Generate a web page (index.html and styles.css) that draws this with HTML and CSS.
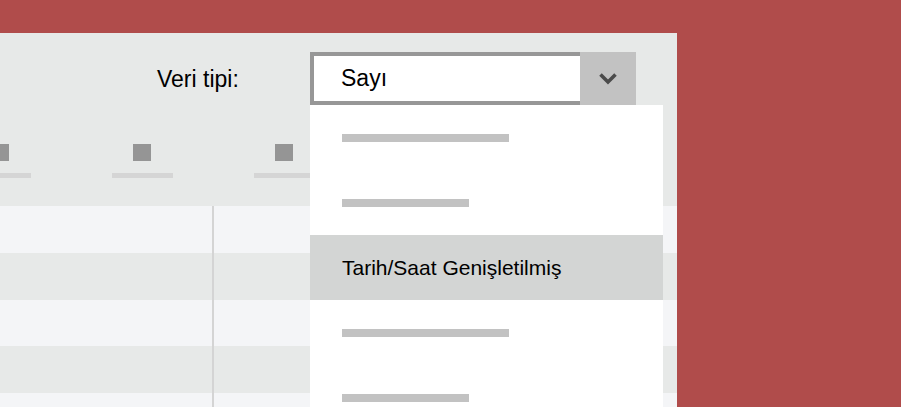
FILE: index.html
```html
<!DOCTYPE html>
<html lang="tr">
<head>
<meta charset="utf-8">
<title>Veri tipi</title>
<link rel="stylesheet" href="styles.css">
</head>
<body>
<div class="stage">
  <div class="panel">
    <div class="toolbar">
      <span class="label">Veri tipi:</span>
      <div class="select">
        <div class="select-value">Sayı</div>
        <div class="select-btn">
          <svg width="18" height="12" viewBox="0 0 18 12"><polyline points="1.5,1.5 9,9 16.5,1.5" fill="none" stroke="#4b4b4b" stroke-width="3.6"/></svg>
        </div>
      </div>
    </div>
    <div class="head">
      <div class="hcol"><span class="sq"></span><span class="hbar"></span></div>
      <div class="hcol"><span class="sq"></span><span class="hbar"></span></div>
      <div class="hcol"><span class="sq"></span><span class="hbar"></span></div>
      <div class="hcol"><span class="sq"></span><span class="hbar"></span></div>
      <div class="hcol"><span class="sq"></span><span class="hbar"></span></div>
    </div>
    <div class="table">
      <div class="row light"><div class="c1"></div><div class="c2"></div></div>
      <div class="row dark"><div class="c1"></div><div class="c2"></div></div>
      <div class="row light"><div class="c1"></div><div class="c2"></div></div>
      <div class="row dark"><div class="c1"></div><div class="c2"></div></div>
      <div class="row light"><div class="c1"></div><div class="c2"></div></div>
    </div>
    <div class="menu">
      <div class="item"><span class="ph long"></span></div>
      <div class="item"><span class="ph short"></span></div>
      <div class="item active">Tarih/Saat Genişletilmiş</div>
      <div class="item"><span class="ph long"></span></div>
      <div class="item"><span class="ph short"></span></div>
    </div>
  </div>
</div>
</body>
</html>
```
FILE: styles.css
```css
* { box-sizing: border-box; }
html, body { margin: 0; padding: 0; }
body {
  width: 901px;
  height: 407px;
  overflow: hidden;
  background: #b04c4b;
  font-family: "Liberation Sans", Arial, sans-serif;
  color: #000;
}
.stage {
  padding-top: 33px;
  height: 407px;
}
.panel {
  position: relative;
  width: 677px;
  height: 374px;
  background: #e7e9e8;
  overflow: hidden;
}
.toolbar {
  display: flex;
  align-items: center;
  height: 72px;
  padding-top: 19px;
  padding-left: 157px;
}
.label {
  font-size: 23px;
  width: 153px;
  line-height: 52px;
}
.select {
  display: flex;
  height: 53px;
}
.select-value {
  width: 270px;
  border: 4px solid #979797;
  border-right: none;
  background: #fff;
  font-size: 23px;
  line-height: 44px;
  padding-left: 27px;
}
.select-btn {
  width: 56px;
  background: #c2c2c2;
  display: flex;
  align-items: center;
  justify-content: center;
}
.head {
  display: flex;
  height: 101px;
  margin-left: -71px;
  padding-top: 39px;
}
.hcol {
  width: 142px;
  flex: none;
  display: flex;
  flex-direction: column;
  align-items: center;
}
.sq {
  width: 18px;
  height: 17px;
  background: #959595;
}
.hbar {
  margin-top: 12px;
  width: 61px;
  height: 5px;
  background: #d5d5d5;
}
.table {
  display: flex;
  flex-direction: column;
}
.row {
  display: flex;
  height: 47px;
}
.row:nth-child(3) { height: 46px; }
.light { background: #f4f5f7; }
.dark { background: #e7e9e8; }
.c1 {
  width: 214px;
  border-right: 2px solid #d4d4d4;
}
.c2 { flex: 1; }
.menu {
  position: absolute;
  left: 310px;
  top: 72px;
  width: 353px;
  bottom: 0;
  background: #fff;
  display: flex;
  flex-direction: column;
}
.item {
  flex: none;
  height: 65px;
  display: flex;
  align-items: center;
  padding-left: 32px;
  font-size: 21px;
}
.item.active {
  background: #d3d5d4;
}
.ph {
  display: block;
  height: 8px;
  background: #c2c2c2;
}
.ph.long { width: 167px; }
.ph.short { width: 127px; }
```
